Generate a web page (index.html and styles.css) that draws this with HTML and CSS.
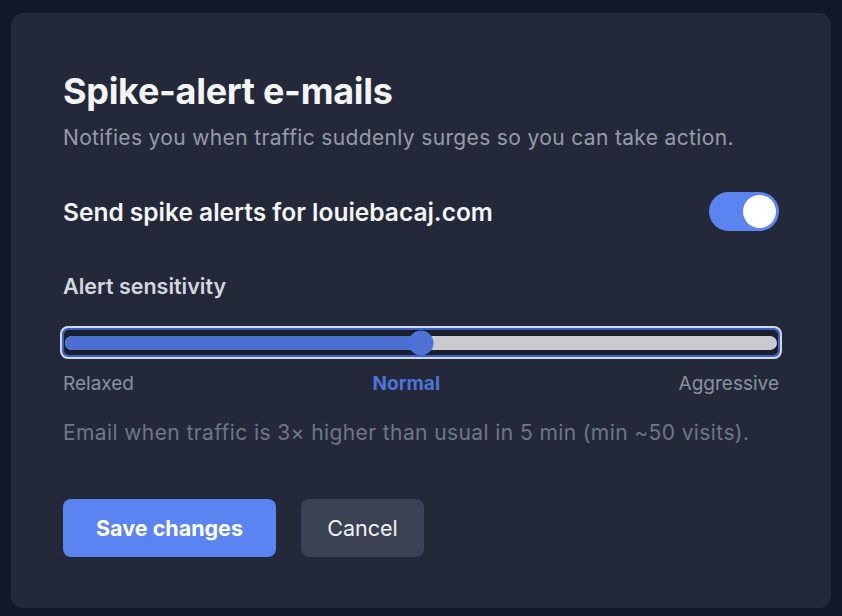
FILE: index.html
```html
<!DOCTYPE html>
<html lang="en">
<head>
<meta charset="utf-8">
<title>Spike-alert e-mails</title>
<link rel="stylesheet" href="styles.css">
</head>
<body>
<div class="card">
  <h1 class="title">Spike-alert e-mails</h1>
  <p class="subtitle">Notifies you when traffic suddenly surges so you can take action.</p>

  <div class="toggle-row">
    <span class="toggle-label">Send spike alerts for louiebacaj.com</span>
    <span class="toggle on"><span class="knob"></span></span>
  </div>

  <div class="section-label">Alert sensitivity</div>

  <div class="slider" role="slider" aria-valuenow="50">
    <div class="slider-inner">
      <div class="track">
        <div class="fill" style="width: 50%"></div>
        <div class="thumb" style="left: 50%"></div>
      </div>
    </div>
  </div>

  <div class="scale">
    <span class="scale-item">Relaxed</span>
    <span class="scale-item active">Normal</span>
    <span class="scale-item">Aggressive</span>
  </div>

  <p class="desc">Email when traffic is 3× higher than usual in 5 min (min ~50 visits).</p>

  <div class="actions">
    <button class="btn btn-primary">Save changes</button>
    <button class="btn btn-secondary">Cancel</button>
  </div>
</div>
</body>
</html>
```

FILE: styles.css
```css
* { box-sizing: border-box; }
html, body {
  margin: 0;
  padding: 0;
  background: #111827;
  font-family: Inter, "Noto Sans", "Liberation Sans", sans-serif;
  -webkit-font-smoothing: antialiased;
}
body { padding: 13px 11px 8px 11px; }

.card {
  width: 820px;
  height: 595px;
  background: #232939;
  border-radius: 12px;
  padding: 58px 52px 0 52px;
  display: flex;
  flex-direction: column;
}

.title {
  margin: 0;
  font-size: 36px;
  line-height: 40px;
  font-weight: 700;
  color: #f3f4f6;
  letter-spacing: -0.3px;
}

.subtitle {
  margin: 13px 0 0 0;
  font-size: 21px;
  line-height: 28px;
  letter-spacing: 0.35px;
  color: #959cab;
}

.toggle-row {
  margin-top: 40px;
  height: 39px;
  display: flex;
  align-items: center;
  justify-content: space-between;
}
.toggle-label {
  font-size: 24.5px;
  font-weight: 600;
  color: #f3f4f6;
}
.toggle {
  width: 70px;
  height: 39px;
  border-radius: 20px;
  background: #5b84f1;
  padding: 3px;
  display: flex;
  justify-content: flex-end;
  align-items: center;
}
.knob {
  width: 33px;
  height: 33px;
  border-radius: 50%;
  background: #ffffff;
}

.section-label {
  margin-top: 41px;
  font-size: 21.5px;
  line-height: 28px;
  font-weight: 600;
  color: #d4d7de;
}

.slider {
  margin: 26px -3px 0 -3px;
  height: 33px;
  border: 2px solid #d3d7df;
  border-radius: 8px;
  background: #3a60cb;
  padding: 2px;
}
.slider-inner {
  height: 100%;
  border-radius: 5px;
  background: #1a1f2c;
  padding: 0 1px;
  display: flex;
  align-items: center;
}
.track {
  position: relative;
  width: 100%;
  height: 14px;
  border-radius: 7px;
  background: #c9cbd1;
}
.fill {
  height: 100%;
  border-radius: 7px 0 0 7px;
  background: #4c70d2;
}
.thumb {
  position: absolute;
  top: 50%;
  width: 25px;
  height: 25px;
  border-radius: 50%;
  background: #4d72d6;
  transform: translate(-50%, -50%);
}

.scale {
  margin-top: 13px;
  display: flex;
  justify-content: space-between;
  font-size: 19px;
  line-height: 24px;
  color: #8a91a0;
}
.scale-item.active {
  color: #4f74d8;
  font-weight: 700;
}

.desc {
  margin: 23px 0 0 0;
  font-size: 21px;
  line-height: 28px;
  letter-spacing: 0.4px;
  color: #6f7787;
}

.actions {
  margin-top: 52px;
  display: flex;
  gap: 25px;
}
.btn {
  height: 58px;
  border: none;
  border-radius: 8px;
  font-family: inherit;
  font-size: 21.5px;
  padding: 0;
  cursor: pointer;
}
.btn-primary {
  width: 213px;
  background: #5b84f3;
  color: #ffffff;
  font-weight: 700;
}
.btn-secondary {
  width: 123px;
  background: #3b4253;
  color: #f1f2f5;
  font-weight: 400;
}
```
